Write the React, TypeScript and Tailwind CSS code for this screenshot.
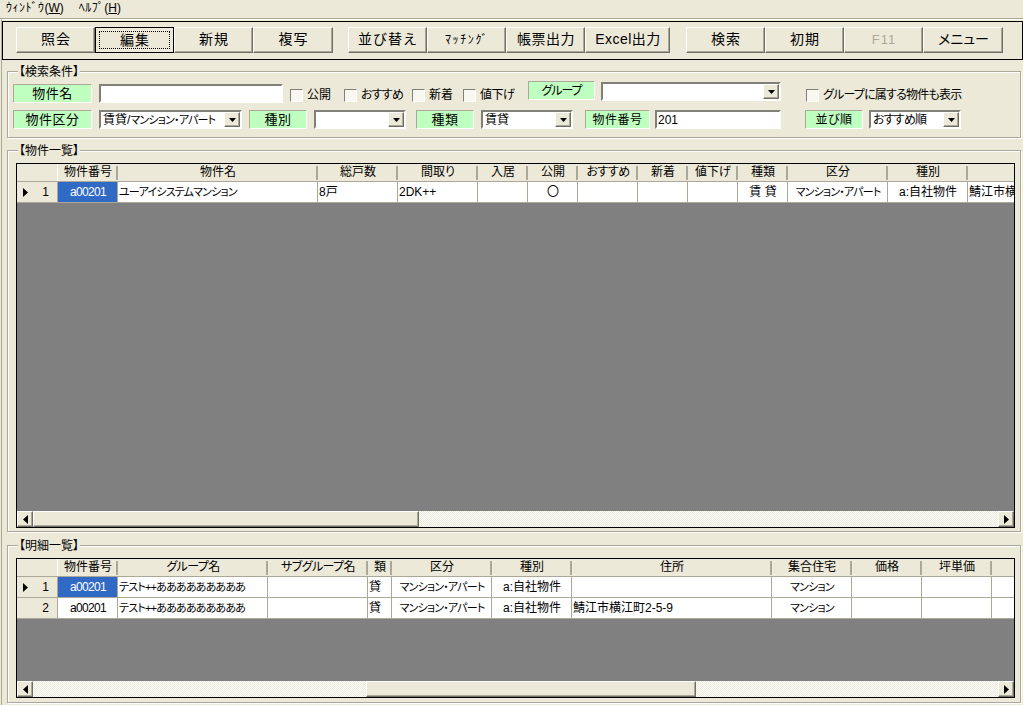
const raised =
  "border border-t-white border-l-white border-r-[#716f64] border-b-[#716f64] shadow-[inset_-1px_-1px_0_#aca899] bg-[#ece9d8]";
const sunken = "border-2 border-t-[#808078] border-l-[#808078] border-r-white border-b-white bg-white";
const etched = "relative border border-[#aca899] shadow-[inset_1px_1px_0_#fff,1px_1px_0_#fff]";
const jp = "[font-feature-settings:'palt']";
const tight = "text-[11px] tracking-[-0.8px]";
const code = "text-[12px] tracking-[-0.7px]";

type Btn = { label: string; cls?: string; focus?: boolean; disabled?: boolean; textCls?: string };

function ToolButton({ label, cls = "w-[79px]", focus, disabled, textCls = "text-[14px] tracking-[1px]" }: Btn) {
  if (focus) {
    return (
      <button className={`${cls} h-[26px] border border-black bg-[#ece9d8] p-[3px] ${textCls}`}>
        <span className="flex h-full items-center justify-center border border-dotted border-black pl-[1px]">
          {label}
        </span>
      </button>
    );
  }
  return (
    <button className={`${cls} ${raised} h-[26px] pb-[1px] pl-[1px] ${textCls} ${disabled ? "text-[#aca899]" : "text-black"}`}>
      {label}
    </button>
  );
}

function Arrow({ dir }: { dir: "down" | "left" | "right" }) {
  if (dir === "down") {
    return (
      <svg width="7" height="4" viewBox="0 0 7 4">
        <path d="M0 0h7L3.5 4z" fill="#000" />
      </svg>
    );
  }
  return (
    <svg width="5" height="9" viewBox="0 0 5 9">
      <path d={dir === "left" ? "M5 0v9L0 4.5z" : "M0 0v9l5-4.5z"} fill="#000" />
    </svg>
  );
}

function Label({
  text,
  cls,
  lift,
  textCls = "text-[13px] tracking-[0.5px]",
}: {
  text: string;
  cls: string;
  lift?: boolean;
  textCls?: string;
}) {
  return (
    <div
      className={`${cls} ${lift ? "-mt-[3px]" : ""} ${textCls} ${jp} flex h-[19px] flex-none items-center justify-center border border-t-[#aca899] border-l-[#aca899] border-r-white border-b-white bg-[#bfffbf]`}
    >
      {text}
    </div>
  );
}

function Combo({ value, cls, lift }: { value?: React.ReactNode; cls: string; lift?: boolean }) {
  return (
    <div className={`${cls} ${sunken} ${lift ? "-mt-[2px]" : ""} flex h-[19px] flex-none items-center justify-between`}>
      <span className={`${jp} whitespace-nowrap pl-[2px] text-[12px] leading-none`}>{value}</span>
      <span className={`${raised} flex h-[15px] w-[16px] flex-none items-center justify-center`}>
        <Arrow dir="down" />
      </span>
    </div>
  );
}

function Check({ text, cls, textCls = "text-[12px]" }: { text: string; cls: string; textCls?: string }) {
  return (
    <div className={`${cls} mt-[2px] flex flex-none items-center`}>
      <span className="h-[13px] w-[13px] flex-none border border-t-[#808078] border-l-[#808078] border-r-white border-b-white bg-[#f8f7f0]" />
      <span className={`${jp} ${textCls} ml-[4px] whitespace-nowrap`}>{text}</span>
    </div>
  );
}

type Col = { cls: string; head: string; center?: boolean; cell?: string; headTight?: boolean };

function Grid({
  cols,
  rows,
  heightCls,
  thumbLeft,
  thumbCls,
}: {
  cols: Col[];
  rows: string[][];
  heightCls: string;
  thumbLeft?: string;
  thumbCls: string;
}) {
  return (
    <div className={`${heightCls} flex w-[999px] flex-col overflow-hidden border border-black`}>
      <div className="flex h-[18px] flex-none border-b border-[#aca899] bg-[#ece9d8]">
        <div className="w-[41px] flex-none border-r border-white" />
        {cols.map((c) => (
          <div
            key={c.head + c.cls}
            className={`${c.cls} ${jp} ${
              c.headTight ? "tracking-[-0.6px]" : ""
            } relative flex-none overflow-hidden whitespace-nowrap text-center text-[12px] leading-[17px] after:absolute after:bottom-[1px] after:right-0 after:top-[2px] after:w-[2px] after:bg-[#aca899]`}
          >
            {c.head}
          </div>
        ))}
      </div>
      {rows.map((r, i) => (
        <div key={i} className="flex h-[21px] flex-none">
          <div className="flex w-[41px] flex-none items-center justify-between border-b border-r border-b-[#aca899] border-r-[#aca899] bg-[#ece9d8] pl-[6px] pr-[8px] text-[12px]">
            <span className="flex w-[5px]">{i === 0 && <Arrow dir="right" />}</span>
            <span>{i + 1}</span>
          </div>
          {cols.map((c, j) => (
            <div
              key={j}
              className={`${c.cls} ${jp} ${c.cell ?? "text-[12px]"} flex-none overflow-hidden whitespace-nowrap border-b border-r border-b-[#aca899] border-r-[#aca899] pl-[1px] leading-[20px] ${
                c.center ? "text-center" : ""
              } ${j === 0 && i === 0 ? "bg-[#316ac5] text-white" : "bg-white"}`}
            >
              {r[j]}
            </div>
          ))}
        </div>
      ))}
      <div className="flex-1 bg-[#808080]" />
      <div className="flex h-[16px] flex-none bg-[repeating-conic-gradient(#fff_0_25%,#ece9d8_0_50%)] bg-[length:2px_2px]">
        <span className={`${raised} flex h-[16px] w-[16px] flex-none items-center justify-center`}>
          <Arrow dir="left" />
        </span>
        {thumbLeft && <span className={`${thumbLeft} flex-none`} />}
        <span className={`${raised} ${thumbCls} h-[16px] flex-none`} />
        <span className="flex-1" />
        <span className={`${raised} flex h-[16px] w-[16px] flex-none items-center justify-center`}>
          <Arrow dir="right" />
        </span>
      </div>
    </div>
  );
}

function Group({ title, cls, children }: { title: string; cls: string; children: React.ReactNode }) {
  return (
    <section className={`${etched} ${cls} ml-[5px] w-[1014px]`}>
      <span className={`${jp} absolute -top-[7px] left-[10px] bg-[#ece9d8] px-[1px] text-[12px] leading-[15px]`}>
        {title}
      </span>
      {children}
    </section>
  );
}

const listCols: Col[] = [
  { cls: "w-[60px]", head: "物件番号", center: true, cell: code },
  { cls: "w-[200px]", head: "物件名", cell: tight },
  { cls: "w-[80px]", head: "総戸数" },
  { cls: "w-[80px]", head: "間取り" },
  { cls: "w-[50px]", head: "入居" },
  { cls: "w-[50px]", head: "公開", center: true },
  { cls: "w-[60px]", head: "おすすめ", headTight: true },
  { cls: "w-[50px]", head: "新着" },
  { cls: "w-[50px]", head: "値下げ" },
  { cls: "w-[50px]", head: "種類", center: true },
  { cls: "w-[100px]", head: "区分", center: true, cell: tight },
  { cls: "w-[80px]", head: "種別", center: true },
  { cls: "w-[48px]", head: " " },
];

const listRows = [
  [
    "a00201",
    "ユーアイシステムマンション",
    "8戸",
    "2DK++",
    "",
    "〇",
    "",
    "",
    "",
    "賃 貸",
    "マンション・アパート",
    "a:自社物件",
    "鯖江市横江町",
  ],
];

const detailCols: Col[] = [
  { cls: "w-[60px]", head: "物件番号", center: true, cell: code },
  { cls: "w-[150px]", head: "グループ名", cell: tight, headTight: true },
  { cls: "w-[100px]", head: "サブグループ名", headTight: true },
  { cls: "w-[24px]", head: "類" },
  { cls: "w-[100px]", head: "区分", center: true, cell: tight },
  { cls: "w-[80px]", head: "種別", center: true },
  { cls: "w-[200px]", head: "住所" },
  { cls: "w-[80px]", head: "集合住宅", center: true, cell: tight },
  { cls: "w-[70px]", head: "価格" },
  { cls: "w-[70px]", head: "坪単価" },
  { cls: "w-[24px]", head: " " },
];

const detailRows = [
  ["a00201", "テスト++あああああああああ", "", "貸", "マンション・アパート", "a:自社物件", "", "マンション", "", "", ""],
  [
    "a00201",
    "テスト++あああああああああ",
    "",
    "貸",
    "マンション・アパート",
    "a:自社物件",
    "鯖江市横江町2-5-9",
    "マンション",
    "",
    "",
    "",
  ],
];

export default function App() {
  return (
    <div className="h-[705px] w-[1023px] overflow-hidden bg-[#ece9d8] font-['Liberation_Sans','Noto_Sans_CJK_JP',sans-serif] text-black">
      <div className="flex h-[19px] items-center gap-[15px] border-b border-[#aca899] pb-[2px] pl-[6px] text-[12px]">
        <span>
          <span className="tracking-[0.5px]">ｳｨﾝﾄﾞｳ</span>(<u>W</u>)
        </span>
        <span>
          <span className="tracking-[0.5px]">ﾍﾙﾌﾟ</span>(<u>H</u>)
        </span>
      </div>

      <main className="ml-[1px] h-[686px] border-l border-t border-l-[#aca899] border-t-white pt-[1px]">
        <div className="flex h-[39px] w-[1021px] items-start border border-black pl-[13px] pt-[5px]">
          <ToolButton label="照会" />
          <ToolButton label="編集" focus />
          <ToolButton label="新規" />
          <ToolButton label="複写" cls="w-[80px]" />
          <div className="w-[15px] flex-none" />
          <ToolButton label="並び替え" />
          <ToolButton label="ﾏｯﾁﾝｸﾞ" textCls="text-[12px] tracking-[1.6px]" />
          <ToolButton label="帳票出力" textCls="text-[14px] tracking-[0.5px]" />
          <ToolButton label="Excel出力" cls="w-[85px]" textCls="text-[14px] tracking-[0.5px]" />
          <div className="w-[16px] flex-none" />
          <ToolButton label="検索" />
          <ToolButton label="初期" />
          <ToolButton label="F11" disabled textCls="text-[13px] tracking-[1px]" />
          <ToolButton label="メニュー" cls="w-[80px]" textCls={`${jp} text-[14px]`} />
        </div>

        <Group title="【検索条件】" cls="mt-[11px] h-[67px]">
          <div className="flex items-start pl-[5px] pt-[12px]">
            <Label text="物件名" cls="w-[79px]" />
            <div className={`${sunken} ml-[7px] h-[19px] w-[184px] flex-none`} />
            <Check text="公開" cls="ml-[7px] w-[54px]" />
            <Check text="おすすめ" cls="w-[68px]" textCls="text-[12px] tracking-[-0.8px]" />
            <Check text="新着" cls="w-[51px]" />
            <Check text="値下げ" cls="w-[65px]" textCls="text-[12px] tracking-[-0.5px]" />
            <Label text="グループ" cls="w-[67px]" lift textCls="text-[12px] tracking-[-1px]" />
            <Combo cls="ml-[6px] w-[180px]" lift />
            <Check text="グループに属する物件も表示" cls="ml-[25px]" textCls="text-[12px] tracking-[-0.8px]" />
          </div>
          <div className="mt-[6px] flex items-start pl-[5px]">
            <Label text="物件区分" cls="w-[79px]" />
            <Combo
              value={
                <>
                  賃貸/<span className={tight}>マンション・アパート</span>
                </>
              }
              cls="ml-[7px] w-[143px]"
            />
            <Label text="種別" cls="ml-[7px] w-[58px]" />
            <Combo cls="ml-[7px] w-[92px]" />
            <Label text="種類" cls="ml-[10px] w-[58px]" />
            <Combo value="賃貸" cls="ml-[7px] w-[92px]" />
            <Label text="物件番号" cls="ml-[12px] w-[65px]" textCls="text-[12px] tracking-[0.5px]" />
            <div className={`${sunken} ml-[5px] flex h-[19px] w-[126px] flex-none items-center pl-[1px] text-[12px]`}>
              201
            </div>
            <Label text="並び順" cls="ml-[24px] w-[58px]" textCls="text-[12px] tracking-[0.5px]" />
            <Combo value={<span className="tracking-[-0.8px]">おすすめ順</span>} cls="ml-[6px] w-[92px]" />
          </div>
        </Group>

        <Group title="【物件一覧】" cls="mt-[12px] h-[382px]">
          <div className="pl-[8px] pt-[12px]">
            <Grid cols={listCols} rows={listRows} heightCls="h-[365px]" thumbCls="w-[386px]" />
          </div>
        </Group>

        <Group title="【明細一覧】" cls="mt-[13px] h-[158px]">
          <div className="pl-[8px] pt-[12px]">
            <Grid
              cols={detailCols}
              rows={detailRows}
              heightCls="h-[140px]"
              thumbLeft="w-[333px]"
              thumbCls="w-[330px]"
            />
          </div>
        </Group>
      </main>
    </div>
  );
}
